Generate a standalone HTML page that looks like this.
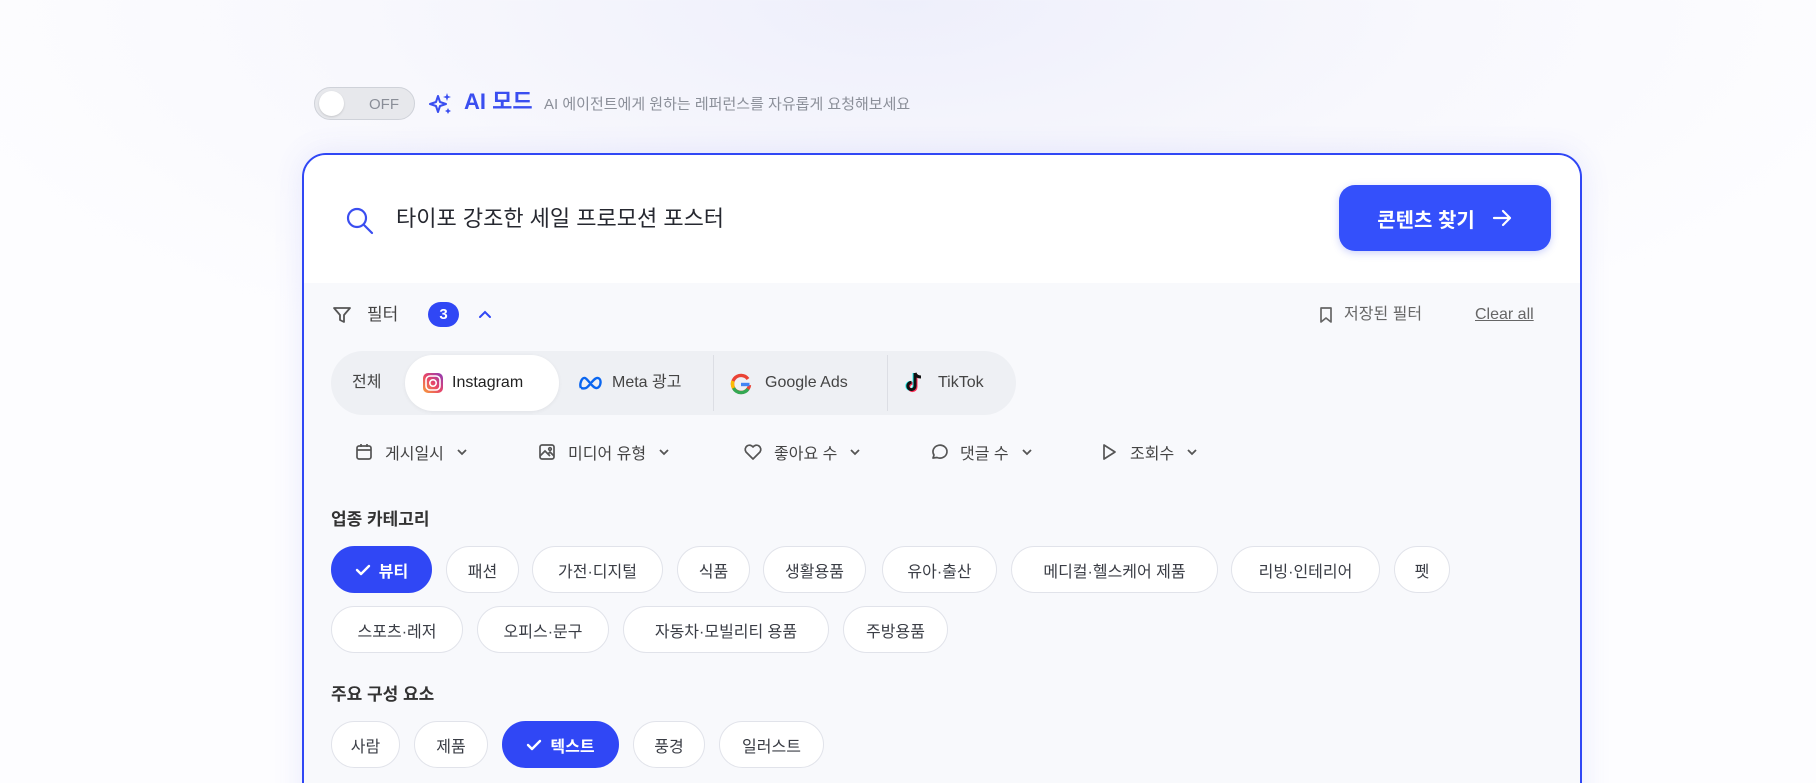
<!DOCTYPE html>
<html style="width:1816px;height:783px;overflow:hidden"><head><meta charset="utf-8"><style>
*{margin:0;padding:0;box-sizing:border-box}
body{width:1816px;height:783px;overflow:hidden;font-family:"Liberation Sans","Noto Sans CJK KR",sans-serif;background:radial-gradient(ellipse 1000px 400px at 900px 0px,#eeeffb 0%,#f8f8fd 55%,#fdfdff 100%);position:relative;color:#333}
.a{position:absolute}
.toggle{left:314px;top:87px;width:101px;height:33px;border-radius:17px;background:#e7e8ec;border:1.5px solid #cfd2d9}
.knob{left:4px;top:3px;width:25px;height:25px;border-radius:50%;background:#fff;box-shadow:0 1px 2px rgba(0,0,0,.15)}
.card{left:302px;top:153px;width:1280px;height:680px;border:2px solid #3047f5;border-radius:24px;background:#f8f9fc;overflow:hidden;box-shadow:0 0 30px rgba(80,90,240,.12)}
.top{left:0;top:0;width:100%;height:128px;background:#fff}
.btn{left:1035px;top:30px;width:212px;height:66px;background:#3450fb;border-radius:16px;color:#fff;font-weight:bold;font-size:20px;display:flex;align-items:center;justify-content:center;gap:16px;box-shadow:0 2px 8px rgba(50,70,240,.25)}
.t{font-size:16px;color:#444;white-space:nowrap;line-height:1}
.pill{position:absolute;height:47px;border:1px solid #e1e3ea;border-radius:24px;background:#fff;display:flex;align-items:center;justify-content:center;font-size:16px;color:#3a3d45;white-space:nowrap}
.sel{background:#3047f5;border-color:#3047f5;color:#fff;font-weight:bold;gap:8px}
.dd{position:absolute;top:285px;display:flex;align-items:center;gap:11px;font-size:16px;color:#444}
</style></head><body>
<div class="a toggle"><div class="a knob"></div><span class="a" style="left:54px;top:8px;font-size:15px;color:#8a8e98">OFF</span></div>
<svg class="a" style="left:429px;top:92px" width="24" height="24" viewBox="0 0 24 24" fill="#3a4ef0"><path d="M9 4 L11 10 L17 12 L11 14 L9 20 L7 14 L1 12 L7 10Z" fill="none" stroke="#3a4ef0" stroke-width="2" stroke-linejoin="round"/><path d="M18 1 L19 4 L22 5 L19 6 L18 9 L17 6 L14 5 L17 4Z"/><path d="M19 16 L20 18 L22 19 L20 20 L19 22 L18 20 L16 19 L18 18Z"/></svg>
<div class="a" style="left:464px;top:91px;font-size:22px;font-weight:bold;color:#3a4ef0;line-height:1">AI 모드</div>
<div class="a" style="left:544px;top:97px;font-size:15px;color:#8b8f99;line-height:1">AI 에이전트에게 원하는 레퍼런스를 자유롭게 요청해보세요</div>
<div class="a card">
 <div class="a top"></div>
 <svg class="a" style="left:41px;top:51px" width="30" height="30" viewBox="0 0 30 30" fill="none" stroke="#3a4ef0" stroke-width="2.2" stroke-linecap="round"><circle cx="12" cy="12" r="9"/><path d="M19 19 L27 27"/></svg>
 <div class="a" style="left:92px;top:51px;font-size:22px;color:#262830;line-height:1.2">타이포 강조한 세일 프로모션 포스터</div>
 <div class="a btn"><span>콘텐츠 찾기</span><svg width="22" height="22" viewBox="0 0 22 22" fill="none" stroke="#fff" stroke-width="2.2" stroke-linecap="round" stroke-linejoin="round"><path d="M3 11 H19 M12 4 L19 11 L12 18"/></svg></div>
 <svg class="a" style="left:28px;top:150px" width="20" height="20" viewBox="0 0 20 20" fill="none" stroke="#555" stroke-width="1.8" stroke-linejoin="round"><path d="M2 3 H18 L12 10 V17 L8 15 V10Z"/></svg>
 <div class="a t" style="left:63px;top:151px;font-size:17px">필터</div>
 <div class="a" style="left:124px;top:147px;width:31px;height:25px;border-radius:13px;background:#3047f5;color:#fff;font-size:15px;font-weight:bold;text-align:center;line-height:25px">3</div>
 <svg class="a" style="left:173px;top:152px" width="16" height="14" viewBox="0 0 16 14" fill="none" stroke="#3047f5" stroke-width="2" stroke-linecap="round"><path d="M3 10 L8 5 L13 10"/></svg>
 <svg class="a" style="left:1014px;top:151px" width="16" height="18" viewBox="0 0 16 18" fill="none" stroke="#666" stroke-width="1.7" stroke-linejoin="round"><path d="M3 2 H13 V16 L8 12 L3 16Z"/></svg>
 <div class="a t" style="left:1040px;top:152px;color:#666">저장된 필터</div>
 <div class="a t" style="left:1171px;top:152px;color:#666;text-decoration:underline">Clear all</div>
 <div class="a" style="left:27px;top:196px;width:685px;height:64px;border-radius:32px;background:#eef0f4"></div>
 <div class="a t" style="left:48px;top:220px">전체</div>
 <div class="a" style="left:101px;top:200px;width:154px;height:56px;border-radius:28px;background:#fff;box-shadow:0 1px 4px rgba(0,0,0,.06)"></div>
 <svg class="a" style="left:118px;top:217px" width="22" height="22" viewBox="0 0 22 22"><defs><linearGradient id="ig" x1="0" y1="1" x2="1" y2="0"><stop offset="0" stop-color="#f9a03a"/><stop offset=".5" stop-color="#e6456a"/><stop offset="1" stop-color="#8a3ab9"/></linearGradient></defs><rect x="1" y="1" width="20" height="20" rx="5" fill="url(#ig)"/><rect x="4" y="4" width="14" height="14" rx="4" fill="none" stroke="#fff" stroke-width="1.6"/><circle cx="11" cy="11" r="3.2" fill="none" stroke="#fff" stroke-width="1.6"/></svg>
 <div class="a t" style="left:148px;top:220px;color:#222">Instagram</div>
 <svg class="a" style="left:274px;top:220px" width="26" height="16" viewBox="0 0 26 16" fill="none" stroke="#0a66f0" stroke-width="2.4"><path d="M3 13 C1 9 4 2 7 3 C10 4 15 14 19 13 C23 12 24 4 20 3 C16 2 11 12 8 13 C5 14 4 13 3 13"/></svg>
 <div class="a t" style="left:308px;top:220px">Meta 광고</div>
 <div class="a" style="left:409px;top:200px;width:1px;height:56px;background:#dcdee4"></div>
 <svg class="a" style="left:426px;top:218px" width="22" height="22" viewBox="0 0 22 22" fill="none" stroke-width="3.4"><path d="M18 6 A8.5 8.5 0 1 0 19.5 12" stroke="#ea4335"/><path d="M3.5 15 A8.5 8.5 0 0 0 18 16" stroke="#34a853"/><path d="M3 8 A8.5 8.5 0 0 0 3.5 15" stroke="#fbbc05"/><path d="M11 11.5 H19.5" stroke="#4285f4"/></svg>
 <div class="a t" style="left:461px;top:220px">Google Ads</div>
 <div class="a" style="left:583px;top:200px;width:1px;height:56px;background:#dcdee4"></div>
 <svg class="a" style="left:600px;top:216px" width="20" height="22" viewBox="0 0 20 22"><path d="M11 2 V15 A3.6 3.6 0 1 1 7.5 11.4" fill="none" stroke="#25f4ee" stroke-width="3" transform="translate(-1,0)"/><path d="M11 2 V15 A3.6 3.6 0 1 1 7.5 11.4" fill="none" stroke="#fe2c55" stroke-width="3" transform="translate(1,1)"/><path d="M11 2 V15 A3.6 3.6 0 1 1 7.5 11.4 M11 2 C12 5 14 6 17 6" fill="none" stroke="#111" stroke-width="3"/></svg>
 <div class="a t" style="left:634px;top:220px">TikTok</div>
 <div class="dd" style="left:50px"><svg width="20" height="20" viewBox="0 0 20 20" fill="none" stroke="#555" stroke-width="1.7"><rect x="3" y="4" width="14" height="13" rx="2"/><path d="M3 8 H17 M7 2 V5 M13 2 V5"/></svg><span>게시일시</span><svg width="14" height="10" viewBox="0 0 14 10" fill="none" stroke="#555" stroke-width="1.8"><path d="M3 3 L7 7 L11 3"/></svg></div>
 <div class="dd" style="left:233px"><svg width="20" height="20" viewBox="0 0 20 20" fill="none" stroke="#555" stroke-width="1.7"><rect x="3" y="3" width="14" height="14" rx="2"/><path d="M3 14 L8 9 L13 14 M11 12 L13 10 L17 14"/><circle cx="13" cy="7" r="1.3"/></svg><span>미디어 유형</span><svg width="14" height="10" viewBox="0 0 14 10" fill="none" stroke="#555" stroke-width="1.8"><path d="M3 3 L7 7 L11 3"/></svg></div>
 <div class="dd" style="left:439px"><svg width="20" height="20" viewBox="0 0 20 20" fill="none" stroke="#555" stroke-width="1.7" stroke-linejoin="round"><path d="M10 17 L3 10 A4 4 0 0 1 10 5 A4 4 0 0 1 17 10Z"/></svg><span>좋아요 수</span><svg width="14" height="10" viewBox="0 0 14 10" fill="none" stroke="#555" stroke-width="1.8"><path d="M3 3 L7 7 L11 3"/></svg></div>
 <div class="dd" style="left:625px"><svg width="20" height="20" viewBox="0 0 20 20" fill="none" stroke="#555" stroke-width="1.7" stroke-linejoin="round"><path d="M4 16 L5 13 A7 6.5 0 1 1 8 15.5Z"/></svg><span>댓글 수</span><svg width="14" height="10" viewBox="0 0 14 10" fill="none" stroke="#555" stroke-width="1.8"><path d="M3 3 L7 7 L11 3"/></svg></div>
 <div class="dd" style="left:795px"><svg width="20" height="20" viewBox="0 0 20 20" fill="none" stroke="#555" stroke-width="1.7" stroke-linejoin="round"><path d="M5 3 L16 10 L5 17Z"/></svg><span>조회수</span><svg width="14" height="10" viewBox="0 0 14 10" fill="none" stroke="#555" stroke-width="1.8"><path d="M3 3 L7 7 L11 3"/></svg></div>
 <div class="a" style="left:27px;top:350px;font-size:17px;color:#333;font-weight:bold">업종 카테고리</div>
 <div class="pill sel" style="left:27px;top:391px;width:101px"><svg width="16" height="14" viewBox="0 0 16 14" fill="none" stroke="#fff" stroke-width="2.4" stroke-linecap="round" stroke-linejoin="round"><path d="M2 7 L6 11 L14 3"/></svg>뷰티</div>
 <div class="pill" style="left:142px;top:391px;width:73px">패션</div>
 <div class="pill" style="left:228px;top:391px;width:131px">가전·디지털</div>
 <div class="pill" style="left:373px;top:391px;width:73px">식품</div>
 <div class="pill" style="left:459px;top:391px;width:103px">생활용품</div>
 <div class="pill" style="left:578px;top:391px;width:115px">유아·출산</div>
 <div class="pill" style="left:707px;top:391px;width:207px">메디컬·헬스케어 제품</div>
 <div class="pill" style="left:927px;top:391px;width:149px">리빙·인테리어</div>
 <div class="pill" style="left:1090px;top:391px;width:56px">펫</div>
 <div class="pill" style="left:27px;top:451px;width:132px">스포츠·레저</div>
 <div class="pill" style="left:173px;top:451px;width:132px">오피스·문구</div>
 <div class="pill" style="left:319px;top:451px;width:206px">자동차·모빌리티 용품</div>
 <div class="pill" style="left:539px;top:451px;width:105px">주방용품</div>
 <div class="a" style="left:27px;top:525px;font-size:17px;color:#333;font-weight:bold">주요 구성 요소</div>
 <div class="pill" style="left:27px;top:566px;width:69px">사람</div>
 <div class="pill" style="left:110px;top:566px;width:74px">제품</div>
 <div class="pill sel" style="left:198px;top:566px;width:117px"><svg width="16" height="14" viewBox="0 0 16 14" fill="none" stroke="#fff" stroke-width="2.4" stroke-linecap="round" stroke-linejoin="round"><path d="M2 7 L6 11 L14 3"/></svg>텍스트</div>
 <div class="pill" style="left:329px;top:566px;width:72px">풍경</div>
 <div class="pill" style="left:415px;top:566px;width:105px">일러스트</div>
</div>
</body></html>
